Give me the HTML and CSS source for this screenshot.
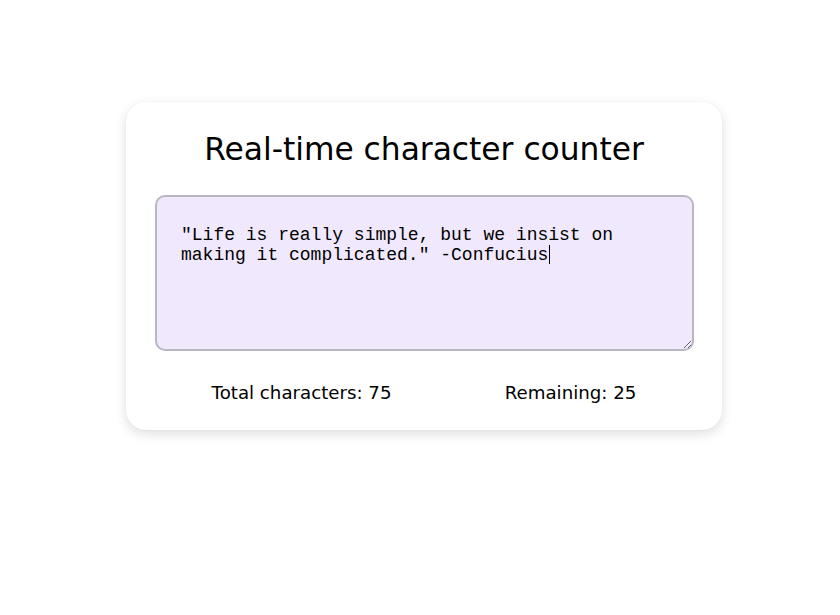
FILE: index.html
```html
<!DOCTYPE html>
<html lang="en">
<head>
<meta charset="utf-8">
<title>Real-time character counter</title>
<link rel="stylesheet" href="styles.css">
</head>
<body>
<main class="card">
  <h1 class="title">Real-time character counter</h1>
  <div class="field">
    <textarea class="input" id="text" spellcheck="false">"Life is really simple, but we insist on making it complicated." -Confucius</textarea>
    <span class="caret"></span>
  </div>
  <div class="stats">
    <span class="stat">Total characters: 75</span>
    <span class="stat">Remaining: 25</span>
  </div>
</main>
</body>
</html>
```
FILE: styles.css
```css
html, body {
  background: #ffffff;
}
body {
  margin: 0 0 0 8px;
  padding-top: 102px;
  min-height: 100vh;
  box-sizing: border-box;
  font-family: "DejaVu Sans", sans-serif;
  color: #000;
}
.card {
  box-sizing: border-box;
  width: 596px;
  margin: 0 auto;
  padding: 29px 29px 27px;
  background: #fff;
  border-radius: 20px;
  box-shadow: 0 4px 12px rgba(40, 50, 70, 0.15), 0 0 2px rgba(0, 0, 0, 0.05);
  display: flex;
  flex-direction: column;
}
.title {
  margin: 0 0 28px;
  font-size: 31.3px;
  font-weight: normal;
  text-align: center;
}
.field {
  position: relative;
  height: 156px;
}
.input {
  display: block;
  box-sizing: border-box;
  width: 539px;
  height: 156px;
  margin: 0;
  padding: 28px 24px 24px;
  border: 2px solid #bbb6c3;
  border-radius: 10px;
  background: #f0e9fd;
  font-family: "Liberation Mono", monospace;
  font-size: 18px;
  line-height: 20px;
  color: #000;
  outline: none;
}
.caret {
  position: absolute;
  left: 394px;
  top: 50px;
  width: 1px;
  height: 19px;
  background: #000;
}
.stats {
  margin-top: 31px;
  display: flex;
  justify-content: space-around;
  font-size: 18.2px;
}
```
